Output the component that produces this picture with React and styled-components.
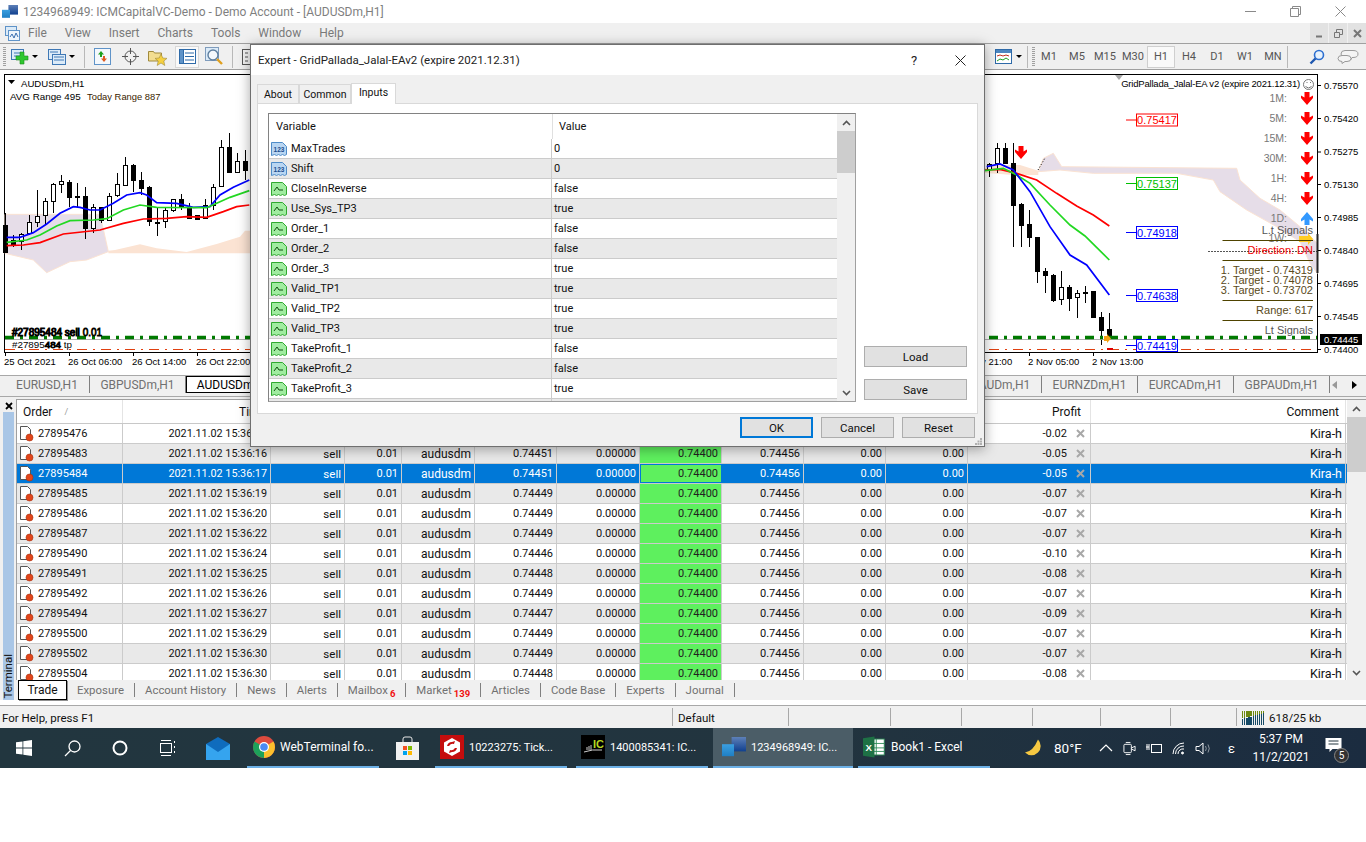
import styled, { createGlobalStyle } from "styled-components";

const GlobalStyle = createGlobalStyle`
  html, body {
    margin: 0;
    padding: 0;
    background: #fff;
  }
  body {
    font-family: Roboto, "Noto Sans", "Liberation Sans", sans-serif;
    font-size: 11.5px;
    color: #111;
  }
`;

const MENU = ["File", "View", "Insert", "Charts", "Tools", "Window", "Help"];
const PERIODS = ["M1", "M5", "M15", "M30", "H1", "H4", "D1", "W1", "MN"];
const LEFT_SYMBOLS = [["EURUSD,H1", 85], ["GBPUSDm,H1", 96]];
const RIGHT_SYMBOLS = ["EURAUDm,H1", "EURNZDm,H1", "EURCADm,H1", "GBPAUDm,H1"];

const INPUTS = [
  ["MaxTrades", "0", "num"],
  ["Shift", "0", "num"],
  ["CloseInReverse", "false"],
  ["Use_Sys_TP3", "true"],
  ["Order_1", "false"],
  ["Order_2", "false"],
  ["Order_3", "true"],
  ["Valid_TP1", "true"],
  ["Valid_TP2", "true"],
  ["Valid_TP3", "true"],
  ["TakeProfit_1", "false"],
  ["TakeProfit_2", "false"],
  ["TakeProfit_3", "true"],
  ["TakeProfit_4", "false"],
];

const ORDERS = [
  ["27895476", "15:36:14", "0.74447", "-0.02"],
  ["27895483", "15:36:16", "0.74451", "-0.05"],
  ["27895484", "15:36:17", "0.74451", "-0.05"],
  ["27895485", "15:36:19", "0.74449", "-0.07"],
  ["27895486", "15:36:20", "0.74449", "-0.07"],
  ["27895487", "15:36:22", "0.74449", "-0.07"],
  ["27895490", "15:36:24", "0.74446", "-0.10"],
  ["27895491", "15:36:25", "0.74448", "-0.08"],
  ["27895492", "15:36:26", "0.74449", "-0.07"],
  ["27895494", "15:36:27", "0.74447", "-0.09"],
  ["27895500", "15:36:29", "0.74449", "-0.07"],
  ["27895502", "15:36:30", "0.74449", "-0.07"],
  ["27895504", "15:36:30", "0.74448", "-0.08"],
];

const COLUMNS = "106px 148px 74px 57px 73px 82px 83px 82px 82px 82px 82px 123px 255px";

const TERMINAL_TABS = [
  ["Exposure"],
  ["Account History"],
  ["News"],
  ["Alerts"],
  ["Mailbox", "6"],
  ["Market", "139"],
  ["Articles"],
  ["Code Base"],
  ["Experts"],
  ["Journal"],
];

// candles traced off the 3x crop: x, wick top, wick bottom, body top, body bottom, white?
const CANDLES_LEFT = [
  [16, 340, 460, 375, 455, 0], [40, 405, 440, 420, 435, 0], [64, 400, 450, 403, 425, 1],
  [88, 345, 405, 367, 400, 1], [112, 270, 380, 347, 365, 1], [136, 295, 375, 304, 345, 1],
  [160, 248, 340, 253, 303, 1], [184, 225, 280, 244, 253, 1], [208, 240, 320, 247, 293, 0],
  [232, 248, 320, 288, 290, 0], [256, 262, 418, 288, 383, 0], [280, 312, 400, 320, 383, 1],
  [304, 322, 370, 322, 360, 0], [328, 278, 358, 287, 358, 1], [352, 220, 290, 253, 287, 1],
  [376, 172, 258, 196, 256, 1], [400, 192, 275, 196, 242, 0], [424, 215, 285, 240, 263, 0],
  [448, 257, 378, 262, 365, 0], [472, 320, 408, 365, 367, 0], [496, 325, 385, 331, 365, 1],
  [520, 297, 335, 298, 332, 1], [544, 282, 330, 297, 320, 0], [568, 308, 358, 323, 352, 0],
  [592, 345, 360, 345, 358, 0], [616, 298, 358, 314, 352, 1], [640, 253, 330, 262, 315, 1],
  [664, 120, 262, 142, 260, 1], [688, 100, 220, 142, 218, 0], [712, 160, 220, 184, 218, 1],
  [736, 150, 240, 184, 212, 0],
];

const CANDLES_RIGHT = [
  [28, 100, 140, 103, 118, 1], [52, 40, 130, 55, 100, 1], [76, 40, 100, 55, 100, 0],
  [100, 40, 350, 100, 225, 0], [124, 220, 350, 223, 285, 0], [148, 240, 350, 283, 323, 0],
  [172, 320, 458, 322, 425, 0], [196, 415, 488, 424, 437, 0], [220, 432, 515, 436, 510, 0],
  [244, 423, 525, 472, 508, 1], [268, 465, 542, 472, 505, 0], [292, 480, 563, 490, 502, 1],
  [316, 468, 520, 487, 490, 0], [340, 482, 563, 484, 563, 0], [364, 545, 645, 562, 602, 0],
  [388, 550, 630, 598, 625, 0],
];

const leftPt = ([x, y]) => [x / 3, 100 + y / 3];
const rightPt = ([x, y]) => [980 + x / 3, 130 + y / 3];
const pts = (list, map) => list.map((p) => map(p).join(",")).join(" ");

const MA_LEFT = {
  "#0000ff": [[20, 412], [60, 412], [100, 398], [140, 372], [180, 340], [220, 320], [240, 322], [270, 330], [300, 330], [340, 310], [380, 285], [420, 278], [440, 285], [470, 308], [530, 310], [580, 322], [630, 320], [660, 285], [700, 262], [748, 240]],
  "#22d822": [[20, 427], [80, 420], [120, 405], [170, 378], [210, 362], [280, 360], [320, 356], [370, 330], [420, 315], [470, 322], [620, 323], [650, 310], [690, 292], [748, 272]],
  "#ff0000": [[20, 437], [70, 435], [120, 428], [190, 402], [300, 390], [370, 370], [430, 357], [500, 355], [560, 350], [620, 352], [670, 335], [710, 320], [748, 315]],
};

const MA_RIGHT = {
  "#ff0000": [[15, 120], [60, 118], [110, 130], [170, 150], [230, 190], [290, 228], [340, 255], [388, 288]],
  "#22d822": [[15, 122], [70, 115], [110, 135], [150, 160], [210, 225], [270, 285], [315, 318], [388, 390]],
  "#0000ff": [[20, 110], [60, 102], [100, 120], [150, 185], [210, 290], [270, 375], [320, 405], [388, 495]],
};

const CLOUD_LEFT_PURPLE = [[15, 343], [300, 343], [325, 455], [260, 480], [210, 485], [140, 518], [100, 480], [15, 460]];
const CLOUD_LEFT_PEACH = [[325, 452], [345, 450], [420, 433], [470, 445], [560, 456], [650, 432], [720, 410], [735, 392], [750, 392], [750, 460], [325, 460]];
const CLOUD_RIGHT_PEACH = [[10, 115], [60, 105], [120, 105], [175, 122], [175, 135], [100, 135], [10, 128]];
const CLOUD_RIGHT_PURPLE = [[175, 125], [190, 85], [220, 70], [245, 110], [770, 115], [780, 150], [840, 205], [900, 240], [960, 290], [1012, 340], [1012, 430], [990, 400], [960, 335], [890, 290], [800, 240], [720, 185], [700, 150], [590, 130], [340, 130], [240, 120]];

const PRICES = [
  ["0.75570", 85], ["0.75420", 118], ["0.75275", 151.5], ["0.75130", 184], ["0.74985", 217],
  ["0.74840", 250], ["0.74695", 283], ["0.74545", 316], ["0.74400", 349],
];

const TIMES = [
  ["25 Oct 2021", 5], ["26 Oct 06:00", 69], ["26 Oct 14:00", 133], ["26 Oct 22:00", 197],
  ["2 Nov 05:00", 1029], ["2 Nov 13:00", 1093],
];

const LEVELS = [
  ["0.75417", 120, "#ff0000"], ["0.75137", 183.5, "#00c000"], ["0.74918", 232.5, "#0000ff"],
  ["0.74638", 295.5, "#0000ff"], ["0.74419", 345.5, "#0000ff"],
];

const FRAMES = [
  ["1M:", 98, "#f00"], ["5M:", 118, "#f00"], ["15M:", 138, "#f00"], ["30M:", 158, "#f00"],
  ["1H:", 178, "#f00"], ["4H:", 198, "#f00"], ["1D:", 218, "#3399ff"],
];

const Candle = ({ c, map }) => {
  const [x, top, bottom, bodyTop, bodyBottom, white] = c;
  const [px, py1] = map([x, top]);
  const [, py2] = map([x, bottom]);
  const [, by1] = map([x, bodyTop]);
  const [, by2] = map([x, bodyBottom]);
  const cx = Math.round(px) + 0.5;
  return (
    <g shapeRendering="crispEdges">
      <line x1={cx} x2={cx} y1={py1} y2={py2} stroke="#000" />
      <rect x={cx - 2} y={Math.round(by1) + 0.5} width={4} height={Math.max(1, Math.round(by2 - by1))} fill={white ? "#fff" : "#000"} stroke="#000" />
    </g>
  );
};

const DownArrow = ({ x, y, color = "#f00" }) => (
  <polygon points={`${x - 2.5},${y} ${x + 2.5},${y} ${x + 2.5},${y + 5.5} ${x + 6},${y + 3.5} ${x + 6},${y + 6} ${x},${y + 13} ${x - 6},${y + 6} ${x - 6},${y + 3.5} ${x - 2.5},${y + 5.5}`} fill={color} />
);

const UpArrow = ({ x, y, color }) => (
  <polygon points={`${x - 2.5},${y + 13} ${x + 2.5},${y + 13} ${x + 2.5},${y + 7.5} ${x + 6},${y + 9.5} ${x + 6},${y + 7} ${x},${y} ${x - 6},${y + 7} ${x - 6},${y + 9.5} ${x - 2.5},${y + 7.5}`} fill={color} />
);

const Chart = () => (
  <ChartSvg viewBox="0 70 1366 305" width="1366" height="305">
    <rect x="4.5" y="74.5" width="1313" height="278" fill="#fff" stroke="#000" />

    <polygon points={pts(CLOUD_LEFT_PURPLE, leftPt)} fill="#e6dde8" stroke="#fbe3d3" />
    <polygon points={pts(CLOUD_LEFT_PEACH, leftPt)} fill="#fbe3d3" />
    <polygon points={pts(CLOUD_RIGHT_PEACH, rightPt)} fill="#fbe3d3" />
    <polygon points={pts(CLOUD_RIGHT_PURPLE, rightPt)} fill="#e6dde8" stroke="#fbe3d3" />

    {CANDLES_LEFT.map((c) => <Candle key={c[0]} c={c} map={leftPt} />)}
    {CANDLES_RIGHT.map((c) => <Candle key={c[0]} c={c} map={rightPt} />)}

    {Object.entries(MA_LEFT).map(([color, list]) => (
      <polyline key={color} points={pts(list, leftPt)} fill="none" stroke={color} strokeWidth="1.7" />
    ))}
    {Object.entries(MA_RIGHT).map(([color, list]) => (
      <polyline key={color} points={pts(list, rightPt)} fill="none" stroke={color} strokeWidth="1.7" />
    ))}
    <line x1="1038" y1="170" x2="1045" y2="158" stroke="#000" strokeDasharray="1 2" />
    <DownArrow x={1021} y={146} />

    <line x1="5" x2="1317" y1="339.5" y2="339.5" stroke="#b0b0b0" />
    <line x1="5" x2="1317" y1="337.5" y2="337.5" stroke="#007a00" strokeWidth="3.5" strokeDasharray="9 6 3 6" />
    <line x1="5" x2="1317" y1="349.5" y2="349.5" stroke="#e04010" strokeDasharray="10 6 2 6" />
    <rect x="1107" y="348" width="6" height="2" fill="#e00000" />
    <polygon points="1104,336 1107,336 1107,334 1111,338.5 1107,343 1107,341 1104,341" fill="#f5a010" />

    <polygon points="8,80 15,80 11.5,84" fill="#000" />
    <ChartText x="21" y="86.5" $size="9.6">AUDUSDm,H1</ChartText>
    <ChartText x="10" y="99.5" $size="9.8">AVG Range 495</ChartText>
    <ChartText x="87" y="99.5" $size="9.4" fill="#3a2400">Today Range 887</ChartText>

    <ChartText x="12" y="335.5" $size="10" fill="#000" stroke="#000" strokeWidth="1">
      #27895484 sell <tspan fill="#e8d800" stroke="#000" strokeWidth=".8">0.01</tspan>
    </ChartText>
    <ChartText x="12" y="347.5" $size="9.8" fill="#000">
      #27895<tspan stroke="#000" strokeWidth=".9">484</tspan> tp
    </ChartText>

    <polygon points="1115,75 1123,75 1119,80" fill="#a8a8a8" />
    <ChartText x="1300" y="86.5" $size="9.5" letterSpacing="-.2" textAnchor="end">GridPallada_Jalal-EA v2 (expire 2021.12.31)</ChartText>
    <circle cx="1308.5" cy="84.5" r="5" fill="none" stroke="#777" />
    <path d="M1305.5 86.5q3 3 6 0M1306.5 82.5h1M1310 82.5h1" fill="none" stroke="#777" />

    {FRAMES.map(([label, y, color]) => (
      <g key={label}>
        <ChartText x="1287" y={y + 3.5} $size="10.5" textAnchor="end" fill="#777">{label}</ChartText>
        {color === "#f00" ? <DownArrow x={1307} y={y - 6} /> : <UpArrow x={1307} y={y - 6} color={color} />}
      </g>
    ))}
    <ChartText x="1287" y="241.5" $size="10.5" textAnchor="end" fill="#777">1W:</ChartText>
    <polygon points="1299,236 1308,236 1308,233 1313,239 1308,245 1308,242 1299,242" fill="#ffcc22" />

    {[240.5, 260.5, 300.5, 320.5].map((y) => (
      <line key={y} x1="1222.5" x2="1313" y1={y} y2={y} stroke="#4f4300" />
    ))}
    <line x1="1208" x2="1317" y1="251.5" y2="251.5" stroke="#555" strokeDasharray="2 1" />
    <ChartText x="1313" y="234" $size="11" textAnchor="end" fill="#555">L.t Signals</ChartText>
    <ChartText x="1313" y="254" $size="11" textAnchor="end" fill="#f00000">Direction: DN</ChartText>
    <ChartText x="1313" y="274" $size="11" textAnchor="end" fill="#5a4a20">1. Target - 0.74319</ChartText>
    <ChartText x="1313" y="284" $size="11" textAnchor="end" fill="#5a4a20">2. Target - 0.74078</ChartText>
    <ChartText x="1313" y="294" $size="11" textAnchor="end" fill="#5a4a20">3. Target - 0.73702</ChartText>
    <ChartText x="1313" y="314" $size="11" textAnchor="end" fill="#5a4a20">Range: 617</ChartText>
    <ChartText x="1313" y="334" $size="11" textAnchor="end" fill="#555">Lt Signals</ChartText>
    <line x1="1317.5" x2="1317.5" y1="234" y2="273" stroke="#222" strokeWidth="2" />

    {LEVELS.map(([label, y, color]) => (
      <g key={label}>
        <line x1="1126" x2="1136" y1={y} y2={y} stroke={color} />
        <rect x="1136.5" y={y - 6} width="41" height="12" fill="#fff" stroke={color} />
        <ChartText x="1157" y={y + 4} $size="11" textAnchor="middle" fill={color}>{label}</ChartText>
      </g>
    ))}

    {PRICES.map(([label, y]) => (
      <g key={label}>
        <line x1="1318" x2="1321" y1={y + 0.5} y2={y + 0.5} stroke="#000" />
        <ChartText x="1324" y={y + 3.5}>{label}</ChartText>
      </g>
    ))}
    <rect x="1320" y="334" width="42" height="11" fill="#000" />
    <ChartText x="1324" y="343" fill="#fff">0.74445</ChartText>

    {TIMES.map(([label, x]) => (
      <g key={label}>
        <line x1={x + 0.5} x2={x + 0.5} y1="352" y2="356" stroke="#000" />
        <ChartText x={x - 1} y="365">{label}</ChartText>
      </g>
    ))}
    <ChartText x="981" y="365">v 21:00</ChartText>
  </ChartSvg>
);

const AppLogo = ({ size = 16 }) => (
  <svg width={size} height={size * 0.8} viewBox="0 0 20 16">
    <defs>
      <linearGradient id="logoA" x1="0" y1="0" x2="0" y2="1">
        <stop offset="0" stopColor="#3b9fe0" />
        <stop offset="1" stopColor="#1f7fc4" />
      </linearGradient>
      <linearGradient id="logoB" x1="0" y1="0" x2="0" y2="1">
        <stop offset="0" stopColor="#5d80b8" />
        <stop offset="1" stopColor="#10408f" />
      </linearGradient>
    </defs>
    <rect x="8" y="0" width="12" height="12" fill="url(#logoB)" />
    <rect x="0" y="6" width="10" height="10" fill="url(#logoA)" />
  </svg>
);

const MenuIcon = () => (
  <svg width="15" height="15" viewBox="0 0 15 15">
    <rect x="0.5" y="0.5" width="11" height="9" fill="#dcebf8" stroke="#5f93c8" />
    <rect x="3.5" y="4.5" width="11" height="10" fill="#eef5fc" stroke="#5f93c8" />
    <path d="M5 11l2-3 2 4 2-5 2 4" fill="none" stroke="#3a6fb0" />
  </svg>
);

const NewChartIcon = () => (
  <svg width="18" height="16" viewBox="0 0 18 16">
    <rect x="0.5" y="0.5" width="12" height="10" fill="#dcebf8" stroke="#3f78b5" />
    <path d="M3 4h6M3 7h6" stroke="#3f78b5" />
    <path d="M9 3h4v4h4v4h-4v4H9v-4H5V7h4z" fill="#2fc72f" stroke="#1c8f1c" strokeWidth=".6" />
  </svg>
);

const ProfilesIcon = () => (
  <svg width="18" height="16" viewBox="0 0 18 16">
    <rect x="0.5" y="0.5" width="12" height="10" fill="#dcebf8" stroke="#3f78b5" />
    <rect x="4.5" y="5.5" width="13" height="10" fill="#dcebf8" stroke="#3f78b5" />
    <path d="M2 3h8M6 8h10M6 11h10" stroke="#3f78b5" />
  </svg>
);

const MarketIcon = () => (
  <svg width="17" height="17" viewBox="0 0 17 17">
    <rect x="0.5" y="0.5" width="16" height="16" fill="#f4f8fc" stroke="#5f93c8" />
    <path d="M7 3l3 3.5H8V9H6V6.5H4z" fill="#1ea01e" />
    <path d="M10 14l-3-3.5h2V8h2v2.5h2z" fill="#e05a20" />
  </svg>
);

const CrossIcon = () => (
  <svg width="17" height="17" viewBox="0 0 17 17" fill="none" stroke="#555">
    <circle cx="8.5" cy="8.5" r="5.5" />
    <path d="M8.5 0v6M8.5 11v6M0 8.5h6M11 8.5h6" />
  </svg>
);

const FolderStarIcon = () => (
  <svg width="19" height="18" viewBox="0 0 19 18">
    <path d="M0.5 3.5h5l1 1.5h7v8h-13z" fill="#f3dd90" stroke="#a08a3c" />
    <polygon points="13,6 14.8,10 19,10.4 15.8,13 16.8,17.5 13,15 9.2,17.5 10.2,13 7,10.4 11.2,10" fill="#f5d040" stroke="#a08a3c" strokeWidth=".6" />
  </svg>
);

const NavigatorIcon = () => (
  <svg width="17" height="15" viewBox="0 0 17 15">
    <rect x="0.5" y="0.5" width="16" height="14" fill="#fff" stroke="#2e6aa8" />
    <rect x="0.5" y="0.5" width="4" height="14" fill="#5f93c8" stroke="#2e6aa8" />
    <path d="M6 4h9M6 7.500h9M6 11h9" stroke="#2e6aa8" />
  </svg>
);

const TesterIcon = () => (
  <svg width="19" height="19" viewBox="0 0 19 19" fill="none">
    <rect x="0.5" y="0.5" width="13" height="13" fill="#dcebf8" stroke="#7f9cbc" />
    <circle cx="8" cy="8" r="5" fill="#f4f8fc" stroke="#5f7f9f" strokeWidth="1.4" />
    <path d="M12 12l5 5" stroke="#e0a020" strokeWidth="2.4" />
  </svg>
);

const OptionsIcon = () => (
  <svg width="16" height="16" viewBox="0 0 16 16" fill="#f4f4f4" stroke="#555">
    <rect x="0.5" y="0.5" width="15" height="15" />
    <path d="M3 4h3M3 8h3M3 12h3" />
  </svg>
);

const TemplateIcon = () => (
  <svg width="17" height="15" viewBox="0 0 17 15">
    <rect x="0.5" y="0.5" width="16" height="14" fill="#fff" stroke="#2e6aa8" />
    <rect x="1" y="1" width="15" height="3" fill="#4d86c0" />
    <path d="M2 7l3-1 3 1 3-1 3 1" fill="none" stroke="#c03020" />
    <path d="M2 12l3-2 3 1 3-2 3 2" fill="none" stroke="#20a020" />
  </svg>
);

const SearchBlue = () => (
  <svg width="16" height="16" viewBox="0 0 16 16" fill="none">
    <circle cx="10" cy="6" r="4.500" stroke="#2d6fd0" strokeWidth="1.600" fill="#e8f2fc" />
    <path d="M6.500 9.500L1.500 14.500" stroke="#2058b0" strokeWidth="2.400" />
  </svg>
);

const ChatIcon = () => (
  <svg width="22" height="16" viewBox="0 0 22 16" fill="#f4f4f4" stroke="#9a9a9a">
    <path d="M8 1.500h8q5 0 5 3.500t-5 3.500h-1l-1 2-2-2H8Q4 8.500 4 5t4-3.500z" />
    <path d="M5 6.500h5q4 0 4 3t-4 3H8l-3 2v-2q-4 0-4-3t4-3z" />
  </svg>
);

const NumIcon = () => (
  <svg width="16" height="16" viewBox="0 0 16 16">
    <path d="M0.500 1.500h11l4 4v8l-2 1-2-1-2 1-2-1-2 1-2-1-3 1z" fill="#b9d6f2" stroke="#4f8cc8" />
    <text x="8" y="11" fontSize="6.500" fontWeight="700" textAnchor="middle" fill="#1f4f8f" fontFamily="Liberation Sans">123</text>
  </svg>
);

const BoolIcon = () => (
  <svg width="16" height="16" viewBox="0 0 16 16">
    <path d="M0.500 1.500h11l4 4v8l-2 1-2-1-2 1-2-1-2 1-2-1-3 1z" fill="#a0eca0" stroke="#30a830" />
    <path d="M3 10l3-4 2 3h4" fill="none" stroke="#104f10" />
  </svg>
);

const OrderIcon = () => (
  <svg width="16" height="17" viewBox="0 0 16 17">
    <path d="M1.500 1.500h7l3 3v10h-10z" fill="#fff" stroke="#555" />
    <circle cx="10.500" cy="12.500" r="3.500" fill="#e2461a" stroke="#a83010" strokeWidth=".6" />
  </svg>
);

const WinLogo = () => (
  <svg width="16" height="16" viewBox="0 0 16 16" fill="#fff">
    <path d="M0 2.300l6.500-.9v6.200H0zM7.300 1.300L16 0v7.600H7.300zM0 8.400h6.500v6.200L0 13.700zM7.300 8.400H16V16l-8.700-1.300z" />
  </svg>
);

const SearchGlass = () => (
  <svg width="17" height="17" viewBox="0 0 17 17" fill="none" stroke="#fff" strokeWidth="1.300">
    <circle cx="10.500" cy="6.500" r="5.500" />
    <path d="M6.500 10.500L1 16" />
  </svg>
);

const CortanaRing = () => (
  <svg width="16" height="16" viewBox="0 0 16 16" fill="none" stroke="#fff" strokeWidth="2">
    <circle cx="8" cy="8" r="6.500" />
  </svg>
);

const TaskViewIcon = () => (
  <svg width="17" height="16" viewBox="0 0 17 16" fill="none" stroke="#fff">
    <rect x="0.500" y="3.500" width="11" height="9" />
    <path d="M1 0.500h10M1 15.500h10M14.500 1v2M14.500 6v2M14.500 11v2" />
  </svg>
);

const MailIcon = () => (
  <svg width="24" height="23" viewBox="0 0 24 23">
    <path d="M12 0L24 7v16H0V7z" fill="#0f6cbd" />
    <path d="M0 7l12 8 12-8v16H0z" fill="#35a4ef" />
  </svg>
);

const ChromeIcon = () => (
  <svg width="22" height="22" viewBox="0 0 22 22">
    <circle cx="11" cy="11" r="11" fill="#dd4b3e" />
    <path d="M11 11L1.500 5.500A11 11 0 0 0 11 22z" fill="#1da15a" />
    <path d="M11 11V22A11 11 0 0 0 20.500 5.500z" fill="#fbc02d" />
    <circle cx="11" cy="11" r="5" fill="#fff" />
    <circle cx="11" cy="11" r="3.800" fill="#4a8af4" />
  </svg>
);

const StoreIcon = () => (
  <svg width="23" height="24" viewBox="0 0 23 24">
    <path d="M7 6V3q0-2 2-2h5q2 0 2 2v3" fill="none" stroke="#e8e8e8" />
    <rect x="0" y="6" width="23" height="18" fill="#f1f1f1" />
    <rect x="7" y="10" width="4" height="4" fill="#f25022" />
    <rect x="12" y="10" width="4" height="4" fill="#7fba00" />
    <rect x="7" y="15" width="4" height="4" fill="#00a4ef" />
    <rect x="12" y="15" width="4" height="4" fill="#ffb900" />
  </svg>
);

const TickIcon = () => (
  <svg width="24" height="24" viewBox="0 0 24 24">
    <rect width="24" height="24" fill="#c40d0d" />
    <polygon points="12,3 20,7.500 20,16.500 12,21 4,16.500 4,7.500" fill="#fff" />
    <path d="M7 11q1-4 5-4l3-1-1 3q-3-1-5 2zM17 13q-1 4-5 4l-3 1 1-3q3 1 5-2z" fill="#c40d0d" />
  </svg>
);

const IcIcon = () => (
  <svg width="24" height="24" viewBox="0 0 24 24">
    <rect width="24" height="24" fill="#000" />
    <text x="12" y="13" fontSize="11" fontWeight="700" fill="#b6d820" fontFamily="Liberation Sans">IC</text>
    <path d="M3 17q8-3 18-2" stroke="#ccc" fill="none" />
    <path d="M6 15v-3M8 15v-4M10 15v-5" stroke="#ccc" />
  </svg>
);

const ExcelIcon = () => (
  <svg width="23" height="22" viewBox="0 0 26 24">
    <rect x="8" y="3" width="16" height="18" fill="#fff" stroke="#2a8a55" />
    <path d="M15 3v18M9 8h15M9 13h15M9 17h15" stroke="#2a8a55" />
    <polygon points="0,2 13,0 13,24 0,22" fill="#1e7145" />
    <text x="6.500" y="16" fontSize="11" fontWeight="700" fill="#fff" textAnchor="middle" fontFamily="Liberation Sans">X</text>
  </svg>
);

const MoonIcon = () => (
  <svg width="19" height="19" viewBox="0 0 19 19">
    <path d="M13 0.500a9 9 0 1 1-13 13q8-1 13-13z" fill="#f5c842" />
  </svg>
);

const TrayIcons = () => (
  <>
    <svg width="14" height="8" viewBox="0 0 14 8" fill="none" stroke="#fff" strokeWidth="1.200"><path d="M1 7l6-6 6 6" /></svg>
    <svg width="13" height="15" viewBox="0 0 14 15" fill="none" stroke="#fff"><rect x="1" y="3" width="8" height="9" rx="1" /><path d="M9 7l4-2v5l-4-2M3 1h5M3 14h5" /></svg>
    <svg width="16" height="11" viewBox="0 0 16 11" fill="none" stroke="#fff"><rect x="5.500" y="1.500" width="10" height="8" /><path d="M0 4h3M1 1v6M3 1v6" /></svg>
    <svg width="13" height="13" viewBox="0 0 13 13" fill="none" stroke="#fff"><path d="M1 12a11 11 0 0 1 11-11M3.500 12a8 8 0 0 1 8.500-8M6 12a5 5 0 0 1 6-5" /><circle cx="10.500" cy="11" r="1" fill="#fff" /></svg>
    <svg width="16" height="13" viewBox="0 0 16 13" fill="none" stroke="#fff"><path d="M1 4.500h3l4-3.500v11l-4-3.500H1z" /><path d="M10.500 4q1.500 2.500 0 5M13 2.500q2.500 4 0 8" strokeOpacity=".5" /></svg>
  </>
);

const NotifyIcon = () => (
  <svg width="17" height="14" viewBox="0 0 16 14">
    <path d="M0 0h16v11H7l-3 3v-3H0z" fill="#fff" />
    <path d="M3 3h10M3 6h10" stroke="#22343f" />
  </svg>
);

const BarsIcon = () => (
  <svg width="23" height="14" viewBox="0 0 23 14" shapeRendering="crispEdges">
    {Array.from({ length: 11 }).map((_, i) => (
      <g key={i}>
        <rect x={i * 2.1} y={0} width="1.300" height={7 - i * 0.5 > 1 ? 7 - i * 0.5 : 1} fill="#6f8a12" />
        <rect x={i * 2.1} y={8 - i * 0.6} width="1.300" height={6 + i * 0.6} fill="#164a66" />
      </g>
    ))}
  </svg>
);

const App = () => {
  return (
    <Page>
      <GlobalStyle />

      <TitleBar>
        <AppLogo />
        <TitleText>1234968949: ICMCapitalVC-Demo - Demo Account - [AUDUSDm,H1]</TitleText>
        <WindowButtons>
          <svg width="11" height="11" viewBox="0 0 11 11" stroke="#8a8a8a"><path d="M0 5.500h11" /></svg>
          <svg width="11" height="11" viewBox="0 0 11 11" fill="none" stroke="#8a8a8a"><path d="M0.500 2.500h8v8h-8zM2.500 2.500v-2h8v8h-2" /></svg>
          <svg width="11" height="11" viewBox="0 0 11 11" stroke="#8a8a8a"><path d="M0.500 0.500l10 10M10.500 0.500l-10 10" /></svg>
        </WindowButtons>
      </TitleBar>

      <MenuBar>
        <MenuIconBox><MenuIcon /></MenuIconBox>
        {MENU.map((m) => <MenuItem key={m}>{m}</MenuItem>)}
        <MdiButtons>
          <MdiButton><svg width="9" height="9" viewBox="0 0 9 9"><path d="M1 7.500h6" stroke="#777" strokeWidth="2" /></svg></MdiButton>
          <MdiButton><svg width="9" height="9" viewBox="0 0 9 9" fill="none" stroke="#777"><path d="M.5 3.500h5v5h-5zM2.500 3V.5h6v5H6" /></svg></MdiButton>
          <MdiButton><svg width="9" height="9" viewBox="0 0 9 9" stroke="#777" strokeWidth="2"><path d="M1 1l7 7M8 1l-7 7" /></svg></MdiButton>
        </MdiButtons>
      </MenuBar>

      <Toolbar>
        <Grip $mr={4} />
        <ToolButton $w={20}><NewChartIcon /></ToolButton><Caret $ml={2} $mr={9} />
        <ToolButton $w={20}><ProfilesIcon /></ToolButton><Caret $ml={2} $mr={9} />
        <ToolSep $mr={4} />
        <ToolButton $w={26}><MarketIcon /></ToolButton>
        <ToolButton $w={30}><CrossIcon /></ToolButton>
        <ToolButton $w={24} $mr={6}><FolderStarIcon /></ToolButton>
        <ToolButton $w={24} $active><NavigatorIcon /></ToolButton>
        <ToolButton $w={30}><TesterIcon /></ToolButton>
        <ToolSep $ml={3} $mr={4} />
        <ToolButton $w={26}><OptionsIcon /></ToolButton>
        <ToolSpacer />
        <ToolButton $w={20}><TemplateIcon /></ToolButton><Caret $ml={3} $mr={5} />
        <ToolSep $mr={3} />
        <Grip />
        {PERIODS.map((p) => (
          <PeriodButton key={p} $active={p === "H1"}>{p}</PeriodButton>
        ))}
        <ToolSep $mr={12} />
        <ToolButton $w={34}><SearchBlue /></ToolButton>
        <ToolButton $w={28}><ChatIcon /></ToolButton>
      </Toolbar>

      <Chart />

      <SymbolTabs>
        {LEFT_SYMBOLS.map(([s, w]) => <SymbolTab key={s} $w={w}>{s}</SymbolTab>)}
        <SymbolTab $w={96} $active>AUDUSDm,H1</SymbolTab>
        <TabSpacer />
        {RIGHT_SYMBOLS.map((s) => <SymbolTab key={s} $w={96}>{s}</SymbolTab>)}
        <TabArrows>
          <svg width="8" height="10" viewBox="0 0 8 10"><path d="M6 1v8L1 5z" fill="#999" /></svg>
          <svg width="8" height="10" viewBox="0 0 8 10"><path d="M2 1v8l5-4z" fill="#000" /></svg>
        </TabArrows>
      </SymbolTabs>

      <Terminal>
        <TerminalStrip>
          <StripClose>
            <svg width="8" height="8" viewBox="0 0 8 8" stroke="#000" strokeWidth="1.800"><path d="M1 1l6 6M7 1L1 7" /></svg>
          </StripClose>
          <StripBar>
            <StripLabel>Terminal</StripLabel>
          </StripBar>
        </TerminalStrip>

        <TerminalMain>
          <TableWrap>
            <OrderTable>
              <HeaderRow>
                <HeaderCell $left>Order<SortMark>/</SortMark></HeaderCell>
                <HeaderCell>Time</HeaderCell>
                <HeaderCell>Type</HeaderCell>
                <HeaderCell>Size</HeaderCell>
                <HeaderCell>Symbol</HeaderCell>
                <HeaderCell>Price</HeaderCell>
                <HeaderCell>S / L</HeaderCell>
                <HeaderCell>T / P</HeaderCell>
                <HeaderCell>Price</HeaderCell>
                <HeaderCell>Commission</HeaderCell>
                <HeaderCell>Swap</HeaderCell>
                <HeaderCell $pad={9}>Profit</HeaderCell>
                <HeaderCell $pad={6}>Comment</HeaderCell>
              </HeaderRow>
              {ORDERS.map(([id, time, price, profit], i) => {
                const sel = i === 2;
                return (
                  <OrderRow key={id} $grey={i % 2 === 1} $sel={sel}>
                    <OrderCell $left><OrderIcon /><span>{id}</span></OrderCell>
                    <OrderCell $size={10.8}>2021.11.02 {time}</OrderCell>
                    <OrderCell $size={11.5}>sell</OrderCell>
                    <OrderCell>0.01</OrderCell>
                    <OrderCell $size={12}>audusdm</OrderCell>
                    <OrderCell>{price}</OrderCell>
                    <OrderCell>0.00000</OrderCell>
                    <TakeProfitCell $sel={sel}>0.74400</TakeProfitCell>
                    <OrderCell>0.74456</OrderCell>
                    <OrderCell>0.00</OrderCell>
                    <OrderCell>0.00</OrderCell>
                    <ProfitCell>
                      {profit}
                      <svg width="9" height="9" viewBox="0 0 9 9" stroke="#a8a8a8" strokeWidth="2"><path d="M1 1l7 7M8 1L1 8" /></svg>
                    </ProfitCell>
                    <OrderCell $size={12.5}>Kira-h</OrderCell>
                  </OrderRow>
                );
              })}
            </OrderTable>
            <TermScroll>
              <ScrollArrow><svg width="9" height="6" viewBox="0 0 9 6" fill="none" stroke="#555" strokeWidth="1.600"><path d="M1 5l3.500-3.500L8 5" /></svg></ScrollArrow>
              <TermThumb />
              <ScrollTrack />
              <ScrollArrow><svg width="9" height="6" viewBox="0 0 9 6" fill="none" stroke="#555" strokeWidth="1.600"><path d="M1 1l3.500 3.500L8 1" /></svg></ScrollArrow>
            </TermScroll>
          </TableWrap>
          <TerminalTabs>
            <TradeTab>Trade</TradeTab>
            {TERMINAL_TABS.map(([label, badge]) => (
              <TerminalTab key={label}>
                {label}
                {badge && <TabBadge>{badge}</TabBadge>}
              </TerminalTab>
            ))}
          </TerminalTabs>
        </TerminalMain>
      </Terminal>

      <StatusBar>
        <StatusCell $w={672}>For Help, press F1</StatusCell>
        <StatusCell $w={116} $divider>Default</StatusCell>
        <StatusCell $w={102} $divider />
        <StatusCell $w={71} $divider />
        <StatusCell $w={71} $divider />
        <StatusCell $w={68} $divider />
        <StatusCell $w={70} $divider />
        <StatusCell $w={66} $divider />
        <StatusCell $w={130} $divider><BarsIcon /><StatusKb>618/25 kb</StatusKb></StatusCell>
      </StatusBar>

      <Taskbar>
        <TaskSlot $w={48}><WinLogo /></TaskSlot>
        <TaskSlot $w={48}><SearchGlass /></TaskSlot>
        <TaskSlot $w={48}><CortanaRing /></TaskSlot>
        <TaskSlot $w={48}><TaskViewIcon /></TaskSlot>
        <TaskSlot $w={52} $mr={3}><MailIcon /></TaskSlot>
        <TaskApp $w={132} $pl={6}><ChromeIcon /><span>WebTerminal fo...</span></TaskApp>
        <TaskSlot $w={56}><StoreIcon /></TaskSlot>
        <TaskApp $w={132} $size={11}><TickIcon /><span>10223275: Tick...</span></TaskApp>
        <TaskApp $w={132} $ml={9} $size={11}><IcIcon /><span>1400085341: IC...</span></TaskApp>
        <TaskApp $w={140} $ml={5} $pl={9} $size={11} $active><AppLogo size={24} /><span>1234968949: IC...</span></TaskApp>
        <TaskApp $w={132} $ml={5}><ExcelIcon /><span>Book1 - Excel</span></TaskApp>
        <TraySpacer />
        <TrayWeather><MoonIcon /><span>80°F</span></TrayWeather>
        <TrayGroup><TrayIcons /></TrayGroup>
        <TrayLang>ε</TrayLang>
        <TrayClock><span>5:37 PM</span><span>11/2/2021</span></TrayClock>
        <TrayNotify>
          <NotifyIcon />
          <NotifyBadge>5</NotifyBadge>
        </TrayNotify>
      </Taskbar>

      <Dialog>
        <DialogTitle>
          <span>Expert - GridPallada_Jalal-EAv2 (expire 2021.12.31)</span>
          <DialogHelp>?</DialogHelp>
          <DialogClose>
            <svg width="11" height="11" viewBox="0 0 11 11" stroke="#222"><path d="M0.500 0.500l10 10M10.500 0.500l-10 10" /></svg>
          </DialogClose>
        </DialogTitle>
        <DialogBody>
          <DialogTabs>
            <DialogTab $w={42}>About</DialogTab>
            <DialogTab $w={52}>Common</DialogTab>
            <DialogTab $w={45} $active>Inputs</DialogTab>
          </DialogTabs>
          <DialogPanel>
            <InputsFrame>
              <InputsList>
                <InputsHeader>
                  <span>Variable</span>
                  <span>Value</span>
                </InputsHeader>
                {INPUTS.map(([name, value, kind], i) => (
                  <InputRow key={name} $grey={i % 2 === 1}>
                    <InputName>{kind === "num" ? <NumIcon /> : <BoolIcon />}<span>{name}</span></InputName>
                    <InputValue>{value}</InputValue>
                  </InputRow>
                ))}
              </InputsList>
              <InputsScroll>
                <ScrollArrow><svg width="9" height="6" viewBox="0 0 9 6" fill="none" stroke="#555" strokeWidth="1.600"><path d="M1 5l3.500-3.500L8 5" /></svg></ScrollArrow>
                <InputsThumb />
                <ScrollTrack />
                <ScrollArrow><svg width="9" height="6" viewBox="0 0 9 6" fill="none" stroke="#555" strokeWidth="1.600"><path d="M1 1l3.500 3.500L8 1" /></svg></ScrollArrow>
              </InputsScroll>
            </InputsFrame>
            <SideButtons>
              <DialogButton $w={103}>Load</DialogButton>
              <DialogButton $w={103}>Save</DialogButton>
            </SideButtons>
          </DialogPanel>
          <DialogFooter>
            <DialogButton $w={73} $primary>OK</DialogButton>
            <DialogButton $w={73}>Cancel</DialogButton>
            <DialogButton $w={73}>Reset</DialogButton>
          </DialogFooter>
          <ResizeGrip>
            <svg width="7" height="7" viewBox="0 0 7 7" fill="#b0b0b0">
              <rect x="5" y="0" width="2" height="2" /><rect x="2.500" y="2.500" width="2" height="2" /><rect x="5" y="2.500" width="2" height="2" />
              <rect x="0" y="5" width="2" height="2" /><rect x="2.500" y="5" width="2" height="2" /><rect x="5" y="5" width="2" height="2" />
            </svg>
          </ResizeGrip>
        </DialogBody>
      </Dialog>
    </Page>
  );
};

export default App;

const Page = styled.div`
  position: relative;
  width: 1366px;
  height: 842px;
  overflow: hidden;
  background: #fff;
`;

const TitleBar = styled.div`
  height: 23px;
  display: flex;
  align-items: center;
  padding-left: 2px;
  background: #fff;
`;

const TitleText = styled.div`
  margin-left: 5px;
  font-size: 12px;
  color: #7f7f7f;
`;

const WindowButtons = styled.div`
  margin-left: auto;
  display: flex;
  align-items: center;
  gap: 34px;
  padding-right: 20px;
`;

const MenuBar = styled.div`
  height: 20px;
  display: flex;
  align-items: center;
  background: #f0f0f0;
`;

const MenuIconBox = styled.div`
  width: 21px;
  padding-left: 5px;
  box-sizing: border-box;
  display: flex;
`;

const MenuItem = styled.div`
  padding: 0 7px;
  margin-right: 4px;
  font-size: 12px;
  color: #7a7a7a;
`;

const MdiButtons = styled.div`
  margin-left: auto;
  display: flex;
  gap: 1px;
  height: 20px;
`;

const MdiButton = styled.div`
  width: 18px;
  background: #e2e2e2;
  display: flex;
  align-items: center;
  justify-content: center;
`;

const Toolbar = styled.div`
  height: 27px;
  box-sizing: border-box;
  display: flex;
  align-items: center;
  padding: 0 4px 0 2px;
  background: #f0f0f0;
  border-top: 1px solid #a0a0a0;
  border-bottom: 1px solid #a0a0a0;
`;

const Grip = styled.div`
  width: 3px;
  height: 20px;
  margin: 0 ${(p) => p.$mr || 0}px 0 1px;
  background: repeating-linear-gradient(to bottom, #a0a0a0 0 1px, transparent 1px 2px);
`;

const ToolButton = styled.div`
  width: ${(p) => p.$w}px;
  height: 22px;
  flex: none;
  margin-right: ${(p) => p.$mr || 0}px;
  box-sizing: border-box;
  display: flex;
  align-items: center;
  justify-content: center;
  background: ${(p) => (p.$active ? "#f9f9f9" : "transparent")};
  border: 1px solid ${(p) => (p.$active ? "#d8d8d8" : "transparent")};
`;

const Caret = styled.div`
  width: 0;
  height: 0;
  margin: 0 ${(p) => p.$mr}px 0 ${(p) => p.$ml}px;
  border-left: 3px solid transparent;
  border-right: 3px solid transparent;
  border-top: 3px solid #000;
`;

const ToolSep = styled.div`
  width: 1px;
  height: 22px;
  margin: 0 ${(p) => p.$mr || 0}px 0 ${(p) => p.$ml || 0}px;
  background: #b8b8b8;
`;

const ToolSpacer = styled.div`
  flex: 1;
`;

const PeriodButton = styled.div`
  width: 28px;
  height: 22px;
  box-sizing: border-box;
  display: flex;
  align-items: center;
  justify-content: center;
  font-size: 11px;
  color: #555;
  background: ${(p) => (p.$active ? "#f9f9f9" : "transparent")};
  border: 1px solid ${(p) => (p.$active ? "#cfcfcf" : "transparent")};
`;

const ChartSvg = styled.svg`
  display: block;
  background: #fff;
`;

const ChartText = styled.text`
  font-family: "Liberation Sans", Arial, sans-serif;
  font-size: ${(p) => p.$size || 9.5}px;
`;

const SymbolTabs = styled.div`
  height: 22px;
  box-sizing: border-box;
  display: flex;
  align-items: stretch;
  padding: 0 0 3px 5px;
  background: #f0f0f0;
  border-top: 1px solid #a8a8a8;
  border-bottom: 1px solid #a8a8a8;
`;

const SymbolTab = styled.div`
  width: ${(p) => p.$w}px;
  flex: none;
  box-sizing: border-box;
  display: flex;
  align-items: center;
  justify-content: center;
  font-size: 12px;
  color: ${(p) => (p.$active ? "#000" : "#707070")};
  background: ${(p) => (p.$active ? "#fff" : "transparent")};
  border-right: 1px solid ${(p) => (p.$active ? "#000" : "#808080")};
  border-left: ${(p) => (p.$active ? "1px solid #000" : "none")};
  border-bottom: ${(p) => (p.$active ? "1px solid #000" : "none")};
  border-top: ${(p) => (p.$active ? "1px solid #000" : "none")};
`;

const TabSpacer = styled.div`
  flex: 1;
`;

const TabArrows = styled.div`
  width: 36px;
  flex: none;
  display: flex;
  align-items: center;
  justify-content: flex-end;
  gap: 11px;
  padding-right: 8px;
  box-sizing: border-box;
`;

const Terminal = styled.div`
  height: 303px;
  display: flex;
  padding: 2px 0 0 3px;
  box-sizing: border-box;
  background: #f0f0f0;
`;

const TerminalStrip = styled.div`
  width: 11px;
  display: flex;
  flex-direction: column;
  margin-right: 2px;
`;

const StripClose = styled.div`
  height: 13px;
  display: flex;
  align-items: center;
  justify-content: center;
  background: #f0f0f0;
`;

const StripBar = styled.div`
  flex: 1;
  display: flex;
  align-items: flex-end;
  justify-content: center;
  background: #a9c6e6;
`;

const StripLabel = styled.div`
  writing-mode: vertical-rl;
  transform: rotate(180deg);
  font-size: 11.5px;
  line-height: 11px;
  color: #111;
  padding-top: 1px;
`;

const TerminalMain = styled.div`
  flex: 1;
  display: flex;
  flex-direction: column;
  min-width: 0;
`;

const TableWrap = styled.div`
  height: 281px;
  flex: none;
  display: flex;
  overflow: hidden;
  border-top: 1px solid #a0a0a0;
  border-left: 1px solid #a0a0a0;
  border-bottom: 1px solid #000;
  background: #fff;
`;

const OrderTable = styled.div`
  width: 1330px;
  flex: none;
`;

const HeaderRow = styled.div`
  height: 24px;
  display: grid;
  grid-template-columns: ${COLUMNS};
  border-bottom: 1px solid #c8c8c8;
  box-sizing: border-box;
`;

const HeaderCell = styled.div`
  display: flex;
  align-items: center;
  justify-content: ${(p) => (p.$left ? "flex-start" : "flex-end")};
  padding: 0 ${(p) => (p.$pad ? p.$pad : 4)}px 0 ${(p) => (p.$left ? 6 : 0)}px;
  border-right: 1px solid #e4e4e4;
  font-size: 12px;
  box-sizing: border-box;
`;

const SortMark = styled.span`
  margin-left: 12px;
  color: #999;
  font-size: 9px;
`;

const OrderRow = styled.div`
  height: 20px;
  display: grid;
  grid-template-columns: ${COLUMNS};
  box-sizing: border-box;
  border-bottom: 1px solid #cbcbcb;
  background: ${(p) => (p.$sel ? "#0078d7" : p.$grey ? "#e9e9e9" : "#fff")};
  color: ${(p) => (p.$sel ? "#fff" : "#111")};
`;

const OrderCell = styled.div`
  display: flex;
  align-items: center;
  justify-content: ${(p) => (p.$left ? "flex-start" : "flex-end")};
  gap: 3px;
  padding: 0 3px 0 ${(p) => (p.$left ? 2 : 0)}px;
  border-right: 1px solid #cbcbcb;
  font-size: ${(p) => p.$size || 11}px;
  box-sizing: border-box;
  white-space: nowrap;
  overflow: hidden;
`;

const TakeProfitCell = styled(OrderCell)`
  background: #5ef05e;
  color: #222;
  outline: ${(p) => (p.$sel ? "1px solid #0078d7" : "none")};
  outline-offset: -1px;
`;

const ProfitCell = styled(OrderCell)`
  gap: 9px;
  padding-right: 5px;
`;

const TermScroll = styled.div`
  flex: 1;
  display: flex;
  flex-direction: column;
  background: #f0f0f0;
`;

const ScrollArrow = styled.div`
  height: 17px;
  flex: none;
  display: flex;
  align-items: center;
  justify-content: center;
`;

const TermThumb = styled.div`
  height: 55px;
  flex: none;
  background: #cdcdcd;
`;

const ScrollTrack = styled.div`
  flex: 1;
`;

const TerminalTabs = styled.div`
  flex: 1;
  display: flex;
  align-items: center;
  margin-top: -2px;
  padding-left: 2px;
  background: #f0f0f0;
`;

const TradeTab = styled.div`
  width: 49px;
  height: 20px;
  box-sizing: border-box;
  display: flex;
  align-items: center;
  justify-content: center;
  font-size: 12px;
  background: #fff;
  border: 1px solid #000;
  box-shadow: 1px 1px 0 #909090;
`;

const TerminalTab = styled.div`
  height: 14px;
  display: flex;
  align-items: center;
  padding: 0 10px;
  font-size: 11.4px;
  color: #707070;
  border-right: 1px solid #808080;
`;

const TabBadge = styled.span`
  color: #f01010;
  font-size: 9.5px;
  font-weight: 700;
  margin: 6px 0 0 2px;
`;

const StatusBar = styled.div`
  margin-top: 5px;
  height: 23px;
  box-sizing: border-box;
  display: flex;
  align-items: center;
  background: #f0f0f0;
  border-top: 1px solid #a8a8a8;
`;

const StatusCell = styled.div`
  width: ${(p) => p.$w}px;
  height: 18px;
  box-sizing: border-box;
  display: flex;
  align-items: center;
  gap: 4px;
  padding: 1px 0 0 ${(p) => (p.$divider ? 5 : 2)}px;
  border-left: ${(p) => (p.$divider ? "1px solid #a8a8a8" : "none")};
  font-size: 11.5px;
`;

const StatusKb = styled.span`
  color: #111;
`;

const Taskbar = styled.div`
  height: 40px;
  display: flex;
  align-items: stretch;
  background: linear-gradient(to right, #22363f, #22343f 60%, #1b2c40);
  color: #fff;
  font-size: 12px;
`;

const TaskSlot = styled.div`
  width: ${(p) => p.$w}px;
  margin-right: ${(p) => p.$mr || 0}px;
  flex: none;
  display: flex;
  align-items: center;
  justify-content: center;
`;

const TaskApp = styled.div`
  width: ${(p) => p.$w}px;
  margin-left: ${(p) => p.$ml || 0}px;
  flex: none;
  box-sizing: border-box;
  display: flex;
  align-items: center;
  gap: 5px;
  padding-left: ${(p) => p.$pl || 5}px;
  font-size: ${(p) => p.$size || 12}px;
  background: ${(p) => (p.$active ? "#4b5d67" : "transparent")};
  border-bottom: 2px solid #6cb0e6;
  white-space: nowrap;
`;

const TraySpacer = styled.div`
  flex: 1;
`;

const TrayWeather = styled.div`
  width: 67px;
  display: flex;
  align-items: center;
  gap: 10px;
  font-size: 13.5px;
`;

const TrayGroup = styled.div`
  width: 132px;
  display: flex;
  align-items: center;
  gap: 10px;
  padding-left: 7px;
  box-sizing: border-box;
`;

const TrayLang = styled.div`
  width: 21px;
  display: flex;
  align-items: center;
  font-size: 13px;
  padding-left: 4px;
  box-sizing: border-box;
`;

const TrayClock = styled.div`
  width: 72px;
  display: flex;
  flex-direction: column;
  align-items: center;
  justify-content: center;
  gap: 3px;
  line-height: 15px;
`;

const TrayNotify = styled.div`
  width: 49px;
  position: relative;
  display: flex;
  align-items: center;
  padding: 0 0 6px 8px;
  box-sizing: border-box;
`;

const NotifyBadge = styled.div`
  position: absolute;
  right: 17px;
  top: 20px;
  width: 15px;
  height: 15px;
  border-radius: 50%;
  background: #333;
  border: 1px solid #888;
  box-sizing: border-box;
  display: flex;
  align-items: center;
  justify-content: center;
  font-size: 10px;
`;

const Dialog = styled.div`
  position: absolute;
  left: 250px;
  top: 44px;
  width: 735px;
  height: 403px;
  box-sizing: border-box;
  display: flex;
  flex-direction: column;
  border: 1px solid #6f6f6f;
  background: #f0f0f0;
  box-shadow: 0 2px 12px rgba(0, 0, 0, 0.35);
`;

const DialogTitle = styled.div`
  height: 30px;
  flex: none;
  display: flex;
  align-items: center;
  padding-left: 7px;
  background: #fff;
  font-size: 11.5px;
  color: #222;
`;

const DialogHelp = styled.div`
  margin-left: auto;
  width: 46px;
  text-align: center;
  font-size: 13px;
`;

const DialogClose = styled.div`
  width: 46px;
  margin-right: 1px;
  display: flex;
  justify-content: center;
`;

const DialogBody = styled.div`
  flex: 1;
  position: relative;
  padding: 7px 6px 0 6px;
  display: flex;
  flex-direction: column;
`;

const DialogTabs = styled.div`
  height: 21px;
  flex: none;
  display: flex;
  align-items: flex-end;
`;

const DialogTab = styled.div`
  width: ${(p) => p.$w}px;
  height: ${(p) => (p.$active ? 21 : 19)}px;
  box-sizing: border-box;
  padding-bottom: ${(p) => (p.$active ? 4 : 0)}px;
  display: flex;
  align-items: center;
  justify-content: center;
  font-size: 10.5px;
  color: #111;
  background: ${(p) => (p.$active ? "#fff" : "#f0f0f0")};
  border: 1px solid #d9d9d9;
  border-bottom: none;
  margin-bottom: ${(p) => (p.$active ? "-1px" : "0")};
  position: relative;
  z-index: ${(p) => (p.$active ? 1 : 0)};
`;

const DialogPanel = styled.div`
  width: 721px;
  height: 311px;
  flex: none;
  box-sizing: border-box;
  display: flex;
  gap: 8px;
  padding: 9px 0 0 10px;
  background: #fff;
  border: 1px solid #d9d9d9;
`;

const InputsFrame = styled.div`
  width: 588px;
  height: 289px;
  box-sizing: border-box;
  display: flex;
  overflow: hidden;
  border: 1px solid #828282;
  border-color: #828282 #a0a0a0 #a0a0a0 #828282;
`;

const InputsList = styled.div`
  width: 568px;
  flex: none;
`;

const InputsHeader = styled.div`
  height: 25px;
  display: grid;
  grid-template-columns: 283px 285px;
  align-items: center;
  font-size: 11px;
  & > span {
    padding-left: 7px;
    height: 100%;
    display: flex;
    align-items: center;
  }
  & > span + span {
    padding-left: 6px;
    border-left: 1px solid #e0e0e0;
  }
`;

const InputRow = styled.div`
  height: 20px;
  box-sizing: border-box;
  display: grid;
  grid-template-columns: 283px 285px;
  background: ${(p) => (p.$grey ? "#e9e9e9" : "#fff")};
  border-bottom: 1px solid #cbcbcb;
`;

const InputName = styled.div`
  display: flex;
  align-items: center;
  gap: 4px;
  padding-left: 2px;
  font-size: 11px;
  border-right: 1px solid #cbcbcb;
`;

const InputValue = styled.div`
  display: flex;
  align-items: center;
  padding-left: 2px;
  font-size: 11px;
`;

const InputsScroll = styled.div`
  flex: 1;
  display: flex;
  flex-direction: column;
  background: #f0f0f0;
`;

const InputsThumb = styled.div`
  height: 42px;
  flex: none;
  background: #cdcdcd;
`;

const SideButtons = styled.div`
  height: 287px;
  display: flex;
  flex-direction: column;
  justify-content: flex-end;
  gap: 12px;
`;

const DialogButton = styled.div`
  width: ${(p) => p.$w}px;
  height: 21px;
  box-sizing: border-box;
  display: flex;
  align-items: center;
  justify-content: center;
  font-size: 11.5px;
  color: #111;
  background: #e1e1e1;
  border: ${(p) => (p.$primary ? "2px solid #0078d7" : "1px solid #adadad")};
`;

const DialogFooter = styled.div`
  flex: 1;
  display: flex;
  align-items: flex-start;
  justify-content: flex-end;
  gap: 8px;
  padding: 3px 3px 0 0;
`;

const ResizeGrip = styled.div`
  position: absolute;
  right: 2px;
  bottom: 1px;
  display: flex;
`;
